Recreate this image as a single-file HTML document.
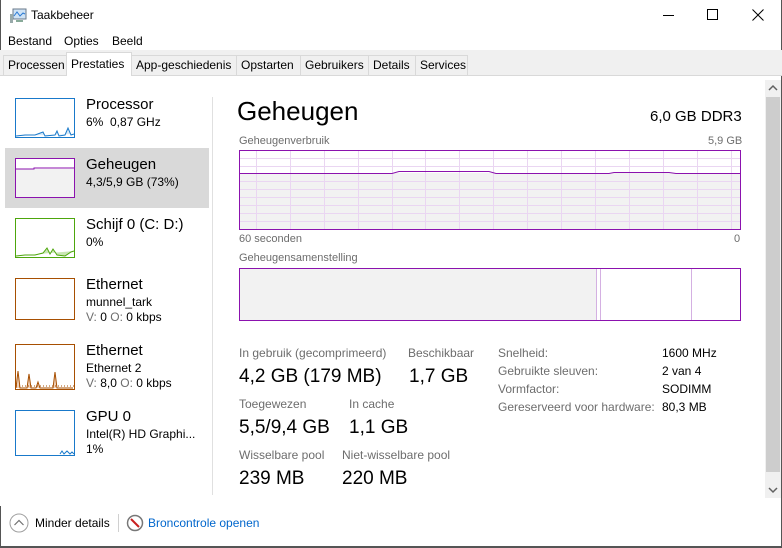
<!DOCTYPE html>
<html><head><meta charset="utf-8"><style>
*{margin:0;padding:0;box-sizing:border-box}
body{width:782px;height:548px;position:relative;overflow:hidden;background:#fff;font-family:"Liberation Sans",sans-serif;color:#000}
.a{position:absolute;white-space:nowrap}
.tab{position:absolute;top:55px;height:21px;background:#f0f0f0;border:1px solid #d9d9d9;font-size:12px;line-height:19px;padding:0 4px}
.lt{font-size:15px}
.ls{font-size:12px}
.lbl{font-size:12px;color:#6d6d6d}
.big{font-size:19px}
.th{position:absolute;left:15px;width:60px;background:#fff}
</style></head><body>
<div class="a" style="left:0;top:0;width:1px;height:548px;background:#555"></div>
<div class="a" style="left:781px;top:0;width:1px;height:548px;background:#555"></div>
<div class="a" style="left:0;top:546px;width:782px;height:2px;background:#555"></div>
<svg class="a" style="left:9px;top:8px" width="18" height="16"><rect x="4" y="1" width="13" height="10" fill="#cfe3f5" stroke="#6a7a8a"/><polyline points="5,8 8,4 11,8 14,5 16,6" fill="none" stroke="#2a7ad4"/><rect x="1" y="6" width="3" height="9" fill="#9aa"/><rect x="7" y="12" width="7" height="2" fill="#8a9"/></svg>
<div class="a" style="left:31px;top:8px;font-size:12px">Taakbeheer</div>
<div class="a" style="left:663px;top:15px;width:11px;height:1px;background:#000"></div>
<div class="a" style="left:707px;top:9px;width:11px;height:11px;border:1px solid #000"></div>
<svg class="a" style="left:752px;top:9px" width="12" height="12"><path d="M0.5 0.5L11.5 11.5M11.5 0.5L0.5 11.5" stroke="#000"/></svg>
<div class="a" style="left:8px;top:34px;font-size:12px">Bestand</div>
<div class="a" style="left:64px;top:34px;font-size:12px">Opties</div>
<div class="a" style="left:112px;top:34px;font-size:12px">Beeld</div>
<div class="a" style="left:0;top:50px;width:782px;height:26px;background:#f0f0f0"></div>
<div class="a" style="left:0;top:75px;width:782px;height:1px;background:#d9d9d9"></div>
<div class="tab" style="left:3px;width:64px">Processen</div>
<div class="tab" style="left:66px;width:66px;top:52px;height:24px;background:#fff;border-bottom:none;line-height:22px">Prestaties</div>
<div class="tab" style="left:131px;width:106px">App-geschiedenis</div>
<div class="tab" style="left:236px;width:65px">Opstarten</div>
<div class="tab" style="left:300px;width:69px">Gebruikers</div>
<div class="tab" style="left:368px;width:48px">Details</div>
<div class="tab" style="left:415px;width:53px">Services</div>
<div class="a" style="left:0;top:76px;width:781px;height:430px;background:#fff"></div>
<div class="a" style="left:5px;top:148px;width:204px;height:60px;background:#d9d9d9"></div>
<div class="a" style="left:212px;top:97px;width:1px;height:398px;background:#e0e0e0"></div>
<!-- thumbnails -->
<svg class="a" style="left:15px;top:98px" width="60" height="40"><rect x=".5" y=".5" width="59" height="39" fill="#fff" stroke="#1979ca"/><polyline points="1,38 10,37 20,37 28,34 30,38 40,37 42,33 44,38 50,37 53,30 56,37 59,36" fill="#d6e9f8" stroke="#1979ca"/></svg>
<svg class="a" style="left:15px;top:158px" width="60" height="40"><rect x=".5" y=".5" width="59" height="39" fill="#f2f2f2" stroke="#8b12ae"/><rect x="1" y="1" width="58" height="10" fill="#fff"/><polyline points="1,11 19,11 19,10 59,10" fill="none" stroke="#8b12ae"/></svg>
<svg class="a" style="left:15px;top:218px" width="60" height="40"><rect x=".5" y=".5" width="59" height="39" fill="#fff" stroke="#4da60c"/><polyline points="1,38 10,37 20,37 28,35 32,30 35,36 38,31 42,37 50,38 56,34 59,33" fill="#c9e6b3" stroke="#4da60c"/></svg>
<svg class="a" style="left:15px;top:278px" width="60" height="42"><rect x=".5" y=".5" width="59" height="41" fill="#fff" stroke="#a74f01"/></svg>
<svg class="a" style="left:15px;top:344px" width="60" height="46"><rect x=".5" y=".5" width="59" height="45" fill="#fff" stroke="#a74f01"/><polyline points="1,44 3,27 5,44 12,44 14,30 16,44 21,44 23,38 25,44 38,44 40,28 42,44 58,44" fill="#f0d2bb" stroke="#a74f01"/><line x1="1" y1="42" x2="59" y2="42" stroke="#a74f01" stroke-dasharray="1,2"/></svg>
<svg class="a" style="left:15px;top:410px" width="60" height="46"><rect x=".5" y=".5" width="59" height="45" fill="#fff" stroke="#1979ca"/><polyline points="45,44 47,41 49,44 52,41 55,44 57,42 59,44" fill="none" stroke="#1979ca"/></svg>
<div class="a lt" style="left:86px;top:96px">Processor</div>
<div class="a ls" style="left:86px;top:115px">6%&nbsp; 0,87 GHz</div>
<div class="a lt" style="left:86px;top:156px">Geheugen</div>
<div class="a ls" style="left:86px;top:175px">4,3/5,9 GB (73%)</div>
<div class="a lt" style="left:86px;top:216px">Schijf 0 (C: D:)</div>
<div class="a ls" style="left:86px;top:235px">0%</div>
<div class="a lt" style="left:86px;top:276px">Ethernet</div>
<div class="a ls" style="left:86px;top:295px">munnel_tark</div>
<div class="a ls" style="left:86px;top:310px"><span style="color:#6d6d6d">V:</span> 0 <span style="color:#6d6d6d">O:</span> 0 kbps</div>
<div class="a lt" style="left:86px;top:342px">Ethernet</div>
<div class="a ls" style="left:86px;top:361px">Ethernet 2</div>
<div class="a ls" style="left:86px;top:376px"><span style="color:#6d6d6d">V:</span> 8,0 <span style="color:#6d6d6d">O:</span> 0 kbps</div>
<div class="a lt" style="left:86px;top:408px">GPU 0</div>
<div class="a ls" style="left:86px;top:427px">Intel(R) HD Graphi...</div>
<div class="a ls" style="left:86px;top:442px">1%</div>
<!-- right -->
<div class="a" style="left:237px;top:96px;font-size:26px">Geheugen</div>
<div class="a" style="left:650px;top:108px;font-size:15px">6,0 GB DDR3</div>
<div class="a" style="left:239px;top:135px;font-size:11px;color:#6d6d6d">Geheugenverbruik</div>
<div class="a" style="left:708px;top:135px;font-size:11px;color:#6d6d6d">5,9 GB</div>
<svg class="a" style="left:239px;top:150px" width="502" height="80">
<rect x="0" y="23" width="502" height="57" fill="#f2f2f2"/>
<g stroke="#ead6f2">
<line x1="0" y1="8.5" x2="502" y2="8.5"/><line x1="0" y1="16.5" x2="502" y2="16.5"/><line x1="0" y1="31.5" x2="502" y2="31.5"/><line x1="0" y1="39.5" x2="502" y2="39.5"/><line x1="0" y1="47.5" x2="502" y2="47.5"/><line x1="0" y1="55.5" x2="502" y2="55.5"/><line x1="0" y1="63.5" x2="502" y2="63.5"/><line x1="0" y1="71.5" x2="502" y2="71.5"/>
<line x1="17.5" y1="0" x2="17.5" y2="80"/><line x1="51.5" y1="0" x2="51.5" y2="80"/><line x1="85.5" y1="0" x2="85.5" y2="80"/><line x1="119.5" y1="0" x2="119.5" y2="80"/><line x1="153.5" y1="0" x2="153.5" y2="80"/><line x1="186.5" y1="0" x2="186.5" y2="80"/><line x1="220.5" y1="0" x2="220.5" y2="80"/><line x1="254.5" y1="0" x2="254.5" y2="80"/><line x1="288.5" y1="0" x2="288.5" y2="80"/><line x1="322.5" y1="0" x2="322.5" y2="80"/><line x1="356.5" y1="0" x2="356.5" y2="80"/><line x1="390.5" y1="0" x2="390.5" y2="80"/><line x1="424.5" y1="0" x2="424.5" y2="80"/><line x1="458.5" y1="0" x2="458.5" y2="80"/><line x1="492.5" y1="0" x2="492.5" y2="80"/>
</g>
<polyline points="0,23.5 153,23.5 160,21.5 250,21.5 257,23.5 370,23.5 375,22.5 430,22.5 437,23.5 502,23.5" fill="none" stroke="#8b12ae"/>
<rect x=".5" y=".5" width="501" height="79" fill="none" stroke="#8b12ae"/>
</svg>
<div class="a" style="left:239px;top:233px;font-size:11px;color:#6d6d6d">60 seconden</div>
<div class="a" style="left:734px;top:233px;font-size:11px;color:#6d6d6d">0</div>
<div class="a" style="left:239px;top:252px;font-size:11px;color:#6d6d6d">Geheugensamenstelling</div>
<svg class="a" style="left:239px;top:268px" width="502" height="53">
<rect x="0" y="0" width="357" height="53" fill="#f2f2f2"/>
<line x1="357.5" y1="0" x2="357.5" y2="53" stroke="#d4b0e2"/><line x1="361.5" y1="0" x2="361.5" y2="53" stroke="#d4b0e2"/><line x1="452.5" y1="0" x2="452.5" y2="53" stroke="#d4b0e2"/>
<rect x=".5" y=".5" width="501" height="52" fill="none" stroke="#8b12ae"/>
</svg>
<div class="a lbl" style="left:239px;top:346px">In gebruik (gecomprimeerd)</div>
<div class="a big" style="left:239px;top:366px">4,2 GB (179 MB)</div>
<div class="a lbl" style="left:408px;top:346px">Beschikbaar</div>
<div class="a big" style="left:409px;top:366px">1,7 GB</div>
<div class="a lbl" style="left:239px;top:397px">Toegewezen</div>
<div class="a big" style="left:239px;top:417px">5,5/9,4 GB</div>
<div class="a lbl" style="left:349px;top:397px">In cache</div>
<div class="a big" style="left:349px;top:417px">1,1 GB</div>
<div class="a lbl" style="left:239px;top:448px">Wisselbare pool</div>
<div class="a big" style="left:239px;top:468px">239 MB</div>
<div class="a lbl" style="left:342px;top:448px">Niet-wisselbare pool</div>
<div class="a big" style="left:342px;top:468px">220 MB</div>
<div class="a lbl" style="left:498px;top:346px">Snelheid:</div>
<div class="a lbl" style="left:498px;top:364px">Gebruikte sleuven:</div>
<div class="a lbl" style="left:498px;top:382px">Vormfactor:</div>
<div class="a lbl" style="left:498px;top:400px">Gereserveerd voor hardware:</div>
<div class="a ls" style="left:662px;top:346px">1600 MHz</div>
<div class="a ls" style="left:662px;top:364px">2 van 4</div>
<div class="a ls" style="left:662px;top:382px">SODIMM</div>
<div class="a ls" style="left:662px;top:400px">80,3 MB</div>
<!-- scrollbar -->
<div class="a" style="left:765px;top:80px;width:16px;height:418px;background:#f0f0f0"></div>
<div class="a" style="left:766px;top:97px;width:14px;height:375px;background:#cdcdcd"></div>
<svg class="a" style="left:768px;top:84px" width="10" height="8"><path d="M1 6L5 2L9 6" fill="none" stroke="#606060" stroke-width="1.5"/></svg>
<svg class="a" style="left:768px;top:486px" width="10" height="8"><path d="M1 2L5 6L9 2" fill="none" stroke="#606060" stroke-width="1.5"/></svg>
<!-- footer -->
<svg class="a" style="left:9px;top:513px" width="20" height="20"><circle cx="10" cy="10" r="9" fill="#fff" stroke="#a0a0a0"/><path d="M5.5 12L10 7.5L14.5 12" fill="none" stroke="#707070" stroke-width="1.2"/></svg>
<div class="a" style="left:35px;top:516px;font-size:12px">Minder details</div>
<div class="a" style="left:118px;top:514px;width:1px;height:18px;background:#d0d0d0"></div>
<svg class="a" style="left:126px;top:514px" width="18" height="18"><circle cx="9" cy="9" r="7.5" fill="#fff" stroke="#777" stroke-width="1.5"/><path d="M5 5L13 13" stroke="#c82020" stroke-width="2"/></svg>
<div class="a" style="left:148px;top:516px;font-size:12px;color:#0066cc">Broncontrole openen</div>
</body></html>
